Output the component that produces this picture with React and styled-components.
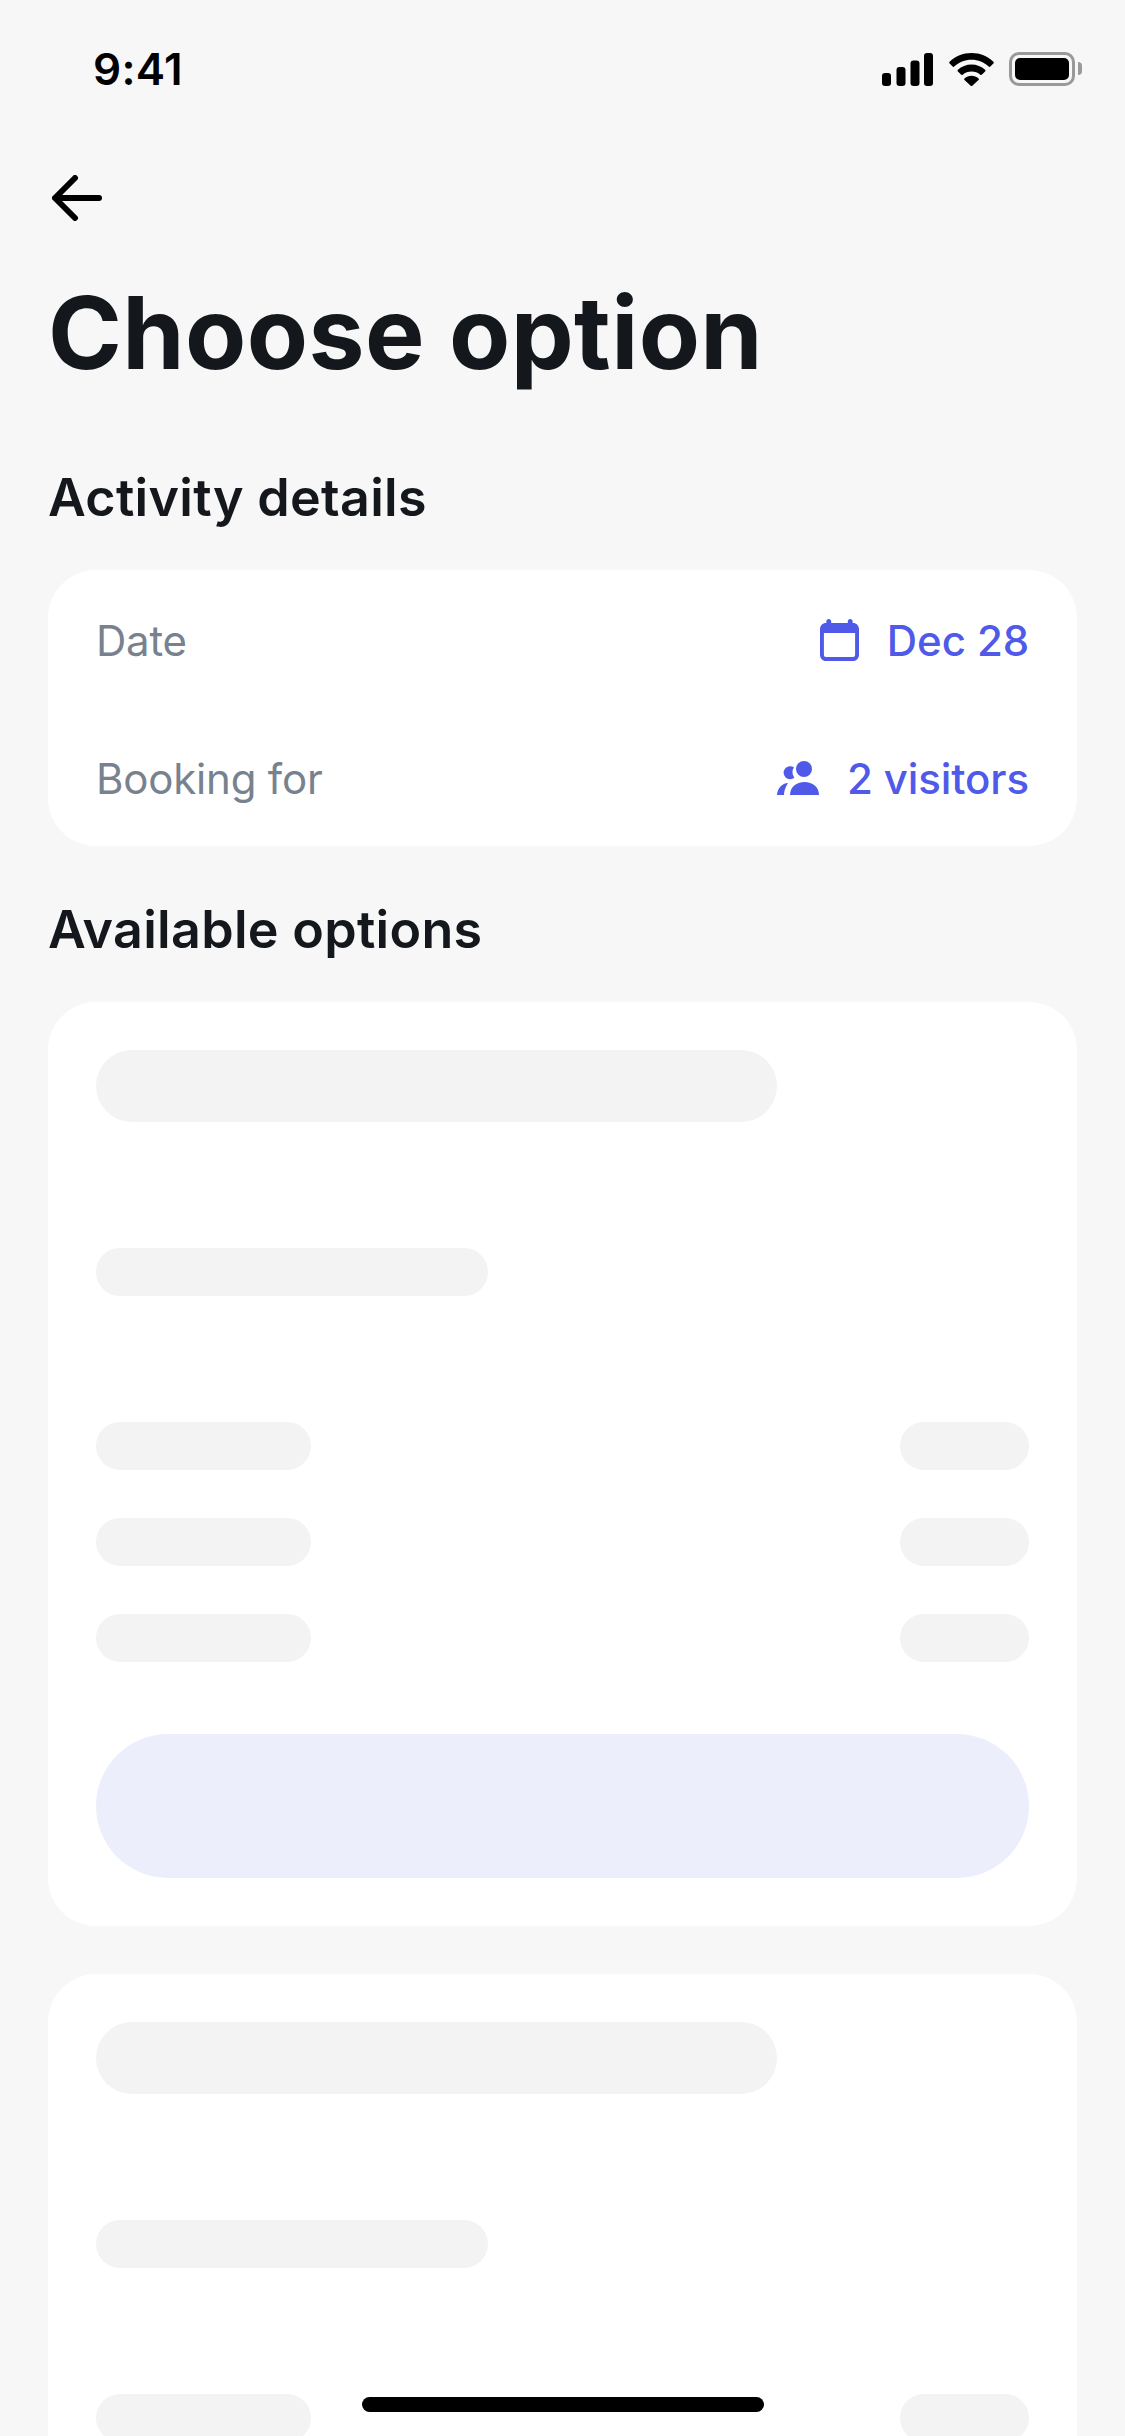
import React from "react";
import styled, { createGlobalStyle } from "styled-components";

const SkeletonCard = () => (
    <Card $padding="48px">
        <Bar $width="681px" $height="72px" />
        <Bar $width="392px" $top="126px" />
        <BarRows>
            {[0, 1, 2].map((i) => (
                <BarRow key={i}>
                    <Bar $width="215px" />
                    <Bar $width="129px" />
                </BarRow>
            ))}
        </BarRows>
        <ButtonBar />
    </Card>
);

const App = () => {
    return (
        <Page>
            <GlobalStyle />
            <StatusBar>
                <Time>9:41</Time>
                <StatusIcons>
                    <svg width="51" height="33" viewBox="0 0 51 33" fill="#000">
                        <rect x="0" y="20" width="9" height="13" rx="3" />
                        <rect x="14.5" y="14" width="9" height="19" rx="3" />
                        <rect x="28.5" y="7.5" width="9" height="25.5" rx="3" />
                        <rect x="42" y="0" width="9" height="33" rx="3" />
                    </svg>
                    <svg width="45" height="33" viewBox="0 0 45 33" fill="#000">
                        <path d="M22.5 0C14 0 6.4 3.3.6 8.7c-.5.5-.5 1.2 0 1.700l3 3.100c.5.500 1.200.500 1.700 0C9.800 9.300 15.900 6.800 22.500 6.800s12.700 2.500 17.200 6.700c.5.500 1.200.500 1.700 0l3-3.100c.5-.5.5-1.200 0-1.700C38.600 3.300 31 0 22.500 0z" />
                        <path d="M22.500 11.500c-5.200 0-10 2-13.600 5.300-.5.500-.5 1.200 0 1.700l3.100 3.100c.5.500 1.200.500 1.700.100 2.400-2 5.400-3.200 8.800-3.200s6.400 1.200 8.800 3.200c.5.400 1.200.400 1.700-.100l3.100-3.100c.5-.5.5-1.200 0-1.700-3.600-3.300-8.400-5.300-13.600-5.300z" />
                        <path d="M22.500 22.800c-2.700 0-5.100 1-7 2.600-.5.500-.5 1.200 0 1.700l6.200 5.600c.5.400 1.100.400 1.600 0l6.200-5.600c.5-.5.5-1.200 0-1.700-1.900-1.600-4.300-2.600-7-2.600z" />
                    </svg>
                    <BatteryBody>
                        <BatteryFill />
                        <BatteryNub />
                    </BatteryBody>
                </StatusIcons>
            </StatusBar>

            <BackButton>
                <svg width="50" height="46" viewBox="0 0 50 46" fill="none" stroke="#000" strokeWidth="6" strokeLinecap="round" strokeLinejoin="round">
                    <path d="M47 23H4" />
                    <path d="M23 3L3 23l20 20" />
                </svg>
            </BackButton>

            <Title>Choose option</Title>

            <SectionTitle $top="73px">Activity details</SectionTitle>
            <Card $padding="48px 48px 46px">
                <DetailRow>
                    <DetailLabel>Date</DetailLabel>
                    <DetailValue>
                        <svg width="39" height="42" viewBox="0 0 40 42" fill="#4F5BE8" preserveAspectRatio="none">
                            <path fillRule="evenodd" d="M9 0c1.400 0 2.500 1.100 2.500 2.500V4h17V2.500C28.500 1.100 29.600 0 31 0s2.500 1.100 2.500 2.500V4H34c3.300 0 6 2.700 6 6v26c0 3.300-2.700 6-6 6H6c-3.300 0-6-2.700-6-6V10c0-3.300 2.700-6 6-6h.5V2.500C6.500 1.100 7.600 0 9 0zM4 14v22c0 1.100.9 2 2 2h28c1.100 0 2-.9 2-2V14H4z" />
                        </svg>
                        Dec 28
                    </DetailValue>
                </DetailRow>
                <DetailRow $top="94px">
                    <DetailLabel>Booking for</DetailLabel>
                    <DetailValue>
                        <svg width="42" height="34" viewBox="0 0 42 34" fill="#4F5BE8">
                            <circle cx="27" cy="8" r="8" />
                            <path d="M13 34c0-8 6.500-13 14.500-13S42 26 42 34H13z" />
                            <path d="M17 6.500A6.500 6.500 0 1 0 17.500 16.500C16 14.800 15.500 13 15.500 11C15.500 9.200 16 7.800 17 6.500z" />
                            <path d="M11 22C5 22.500.5 27 0 34h7c0-4 1.500-8 4-12z" />
                        </svg>
                        2 visitors
                    </DetailValue>
                </DetailRow>
            </Card>

            <SectionTitle $top="52px">Available options</SectionTitle>
            <Options>
                <SkeletonCard />
                <SkeletonCard />
            </Options>

            <HomeIndicator />
        </Page>
    );
};

const GlobalStyle = createGlobalStyle`
  html, body {
    margin: 0;
    padding: 0;
    background-color: #f7f7f7;
  }
`;

const Page = styled.div`
  position: relative;
  width: 1125px;
  height: 2436px;
  overflow: hidden;
  box-sizing: border-box;
  padding: 0 48px;
  background-color: #f7f7f7;
  font-family: Inter, "Liberation Sans", sans-serif;
`;

const StatusBar = styled.div`
  display: flex;
  justify-content: space-between;
  align-items: center;
  height: 138px;
`;

const Time = styled.span`
  margin-left: 45px;
  font-size: 44px;
  font-weight: 600;
  letter-spacing: 0.3px;
  color: #000;
`;

const StatusIcons = styled.div`
  display: flex;
  align-items: center;
  gap: 15.5px;
`;

const BatteryBody = styled.div`
  position: relative;
  display: flex;
  box-sizing: border-box;
  width: 66px;
  height: 34px;
  padding: 3px;
  margin-right: 2px;
  border: 3px solid #999;
  border-radius: 10px;
`;

const BatteryFill = styled.div`
  flex: 1;
  background-color: #000;
  border-radius: 5px;
`;

const BatteryNub = styled.div`
  position: absolute;
  top: 7px;
  right: -10px;
  width: 4px;
  height: 13px;
  background-color: #999;
  border-radius: 0 4px 4px 0;
`;

const BackButton = styled.div`
  display: flex;
  height: 46px;
  margin-top: 37px;
  padding-left: 4px;
`;

const Title = styled.h1`
  margin: 52px 0 0;
  font-size: 100px;
  line-height: 120px;
  font-weight: 700;
  letter-spacing: 0.4px;
  color: #14171c;
`;

const SectionTitle = styled.h2`
  margin: ${(props) => props.$top} 0 40px;
  font-size: 52px;
  line-height: 64px;
  font-weight: 600;
  letter-spacing: 0.3px;
  color: #14171c;
`;

const Card = styled.div`
  padding: ${(props) => props.$padding};
  background-color: #fff;
  border-radius: 48px;
`;

const DetailRow = styled.div`
  display: flex;
  justify-content: space-between;
  align-items: center;
  height: 44px;
  margin-top: ${(props) => props.$top || 0};
  font-size: 42px;
`;

const DetailLabel = styled.span`
  letter-spacing: -0.2px;
  color: #78828f;
`;

const DetailValue = styled.span`
  display: flex;
  align-items: center;
  gap: 28px;
  font-weight: 450;
  letter-spacing: -0.1px;
  color: #4f5be8;
`;

const Options = styled.div`
  display: flex;
  flex-direction: column;
  gap: 48px;
`;

const Bar = styled.div`
  width: ${(props) => props.$width};
  height: ${(props) => props.$height || "48px"};
  margin-top: ${(props) => props.$top || 0};
  background-color: #f3f3f3;
  border-radius: 36px;
`;

const BarRows = styled.div`
  display: flex;
  flex-direction: column;
  gap: 48px;
  margin-top: 126px;
`;

const BarRow = styled.div`
  display: flex;
  justify-content: space-between;
`;

const ButtonBar = styled.div`
  height: 144px;
  margin-top: 72px;
  background-color: #eceefc;
  border-radius: 72px;
`;

const HomeIndicator = styled.div`
  position: absolute;
  left: 362px;
  top: 2397px;
  width: 402px;
  height: 15px;
  background-color: #000;
  border-radius: 8px;
`;

export default App;
